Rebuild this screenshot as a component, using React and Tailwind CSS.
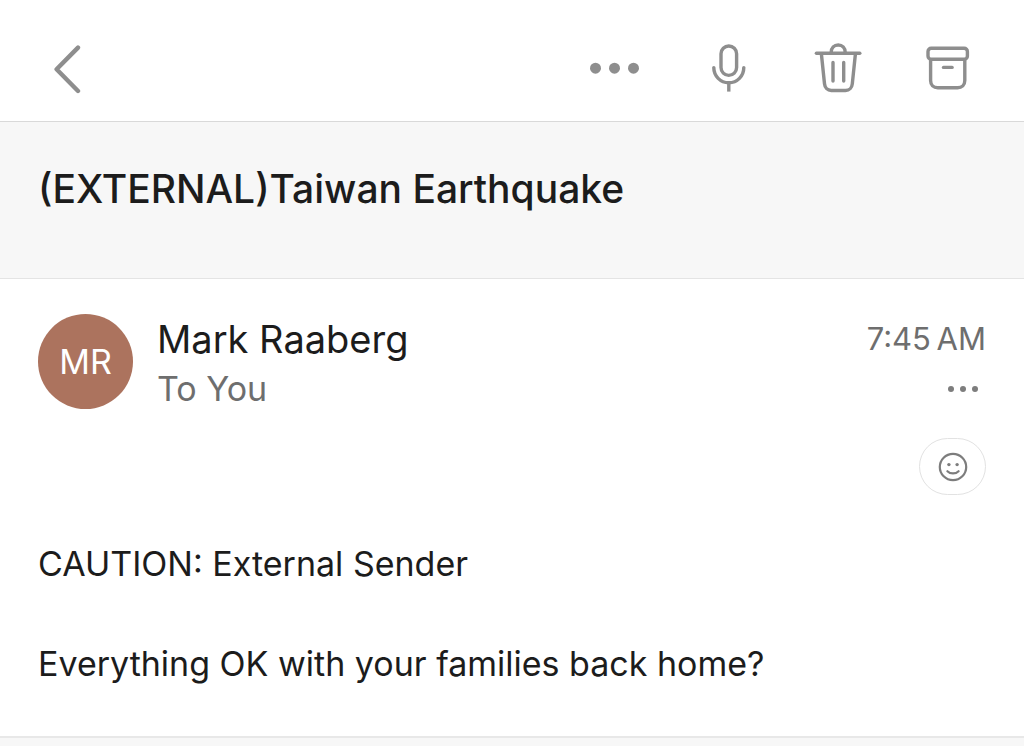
import React from "react";

const BackIcon = () => (
  <svg className="h-[52px] w-[52px]" viewBox="0 0 52 52" fill="none" stroke="currentColor" strokeWidth={4.4} strokeLinecap="round" strokeLinejoin="round" aria-hidden="true">
    <path d="M38 5.6 16.6 27.2 38 49" />
  </svg>
);

const MoreIcon = () => (
  <svg className="h-[52px] w-[60px]" viewBox="0 0 60 52" fill="currentColor" aria-hidden="true">
    <circle cx="11.5" cy="26.2" r="5.5" />
    <circle cx="30.5" cy="26.2" r="5.5" />
    <circle cx="49.5" cy="26.2" r="5.5" />
  </svg>
);

const MicIcon = () => (
  <svg className="h-[52px] w-[52px]" viewBox="0 0 52 52" fill="none" stroke="currentColor" strokeWidth={3.4} strokeLinecap="round" aria-hidden="true">
    <rect x="19" y="4" width="15.6" height="29.4" rx="7.8" />
    <path d="M11.8 25.6c0 8.6 6.6 15.2 15 15.2s15-6.6 15-15.2" />
    <path d="M26.8 41v8.6" strokeLinecap="butt" />
  </svg>
);

const TrashIcon = () => (
  <svg className="h-[52px] w-[52px]" viewBox="0 0 52 52" fill="none" stroke="currentColor" strokeWidth={3.4} strokeLinecap="round" strokeLinejoin="round" aria-hidden="true">
    <path d="M4.4 11.3h43.4" />
    <path d="M19.2 10.4c0-4.4 3-7.4 7-7.4s7 3 7 7.4" />
    <path d="m9.4 12 3.1 29.8c.4 4 3 6.7 6.8 6.7h14.2c3.8 0 6.4-2.7 6.8-6.7L43.4 12" />
    <path d="M21 20.4v18.6M31.7 20.4v18.6" />
  </svg>
);

const ArchiveIcon = () => (
  <svg className="h-[52px] w-[52px]" viewBox="0 0 52 52" fill="none" stroke="currentColor" strokeWidth={3.4} strokeLinecap="round" aria-hidden="true">
    <rect x="6" y="6.3" width="39.4" height="11" rx="3.2" />
    <path d="M8.6 18v20.5c0 4.3 2.9 7.2 7.2 7.2h19.8c4.3 0 7.2-2.9 7.2-7.2V18" />
    <path d="M21.5 25.4h8.6" />
  </svg>
);

const SmileIcon = () => (
  <svg className="h-8 w-8" viewBox="0 0 32 32" fill="none" stroke="currentColor" strokeWidth={2.2} strokeLinecap="round" aria-hidden="true">
    <circle cx="16" cy="16" r="13.2" />
    <circle cx="11.9" cy="13.6" r="1.7" fill="currentColor" stroke="none" />
    <circle cx="20.1" cy="13.6" r="1.7" fill="currentColor" stroke="none" />
    <path d="M10.4 20.2c3 3 8.2 3 11.2 0" />
  </svg>
);

const IconButton = ({ label, children }) => (
  <button type="button" aria-label={label} className="block text-[#8e8e8e]">
    {children}
  </button>
);

const Toolbar = () => (
  <header className="flex items-center justify-between border-b border-[#d9d9d9] bg-white pt-[42px] pr-[50px] pb-[27px] pl-10">
    <IconButton label="Back">
      <BackIcon />
    </IconButton>
    <div className="flex gap-[58px]">
      <IconButton label="More actions">
        <MoreIcon />
      </IconButton>
      <IconButton label="Dictate">
        <MicIcon />
      </IconButton>
      <IconButton label="Delete">
        <TrashIcon />
      </IconButton>
      <IconButton label="Archive">
        <ArchiveIcon />
      </IconButton>
    </div>
  </header>
);

const Message = () => (
  <article className="border-b-2 border-[#e8e8e8] bg-white px-[38px] pt-[35px] pb-[47px]">
    <div className="flex items-start">
      <div className="flex h-[95px] w-[95px] shrink-0 items-center justify-center rounded-full bg-[#ac735e] text-[34px] leading-[50px] text-white">
        MR
      </div>
      <div className="ml-6 flex-1">
        <p className="text-[38px] leading-[50px] text-[#1c1c1c]">Mark Raaberg</p>
        <p className="text-[34px] leading-[50px] text-[#6e6e6e]">To You</p>
      </div>
      <div className="flex flex-col items-end">
        <time className="text-[31px] leading-[50px] text-[#6e6e6e]">7:45{"\u2009"}AM</time>
        <button type="button" aria-label="Message options" className="flex h-[50px] items-center gap-[6px] pr-2 text-[#7d7d7d]">
          <span className="h-[6px] w-[6px] rounded-full bg-current"></span>
          <span className="h-[6px] w-[6px] rounded-full bg-current"></span>
          <span className="h-[6px] w-[6px] rounded-full bg-current"></span>
        </button>
        {/* Reaction picker */}
        <button
          type="button"
          aria-label="Add reaction"
          className="mt-6 flex h-[57px] w-[67px] items-center justify-center rounded-full border border-[#e2e2e2] text-[#7d7d7d]"
        >
          <SmileIcon />
        </button>
      </div>
    </div>

    <div className="mt-11 text-[34px] leading-[50px] text-[#1c1c1c]">
      <p>CAUTION: External Sender</p>
      <p className="mt-[50px]">Everything OK with your families back home?</p>
    </div>
  </article>
);

const App = () => (
  <div className="min-h-screen bg-[#f7f7f7] font-['Inter',sans-serif]">
    <Toolbar />
    <main>
      <div className="border-b border-[#e4e4e4] px-[38px] pt-[42px] pb-16">
        <h1 className="text-[39px] leading-[50px] font-medium text-[#1c1c1c]">
          (EXTERNAL)Taiwan Earthquake
        </h1>
      </div>
      <Message />
    </main>
  </div>
);

export default App;
